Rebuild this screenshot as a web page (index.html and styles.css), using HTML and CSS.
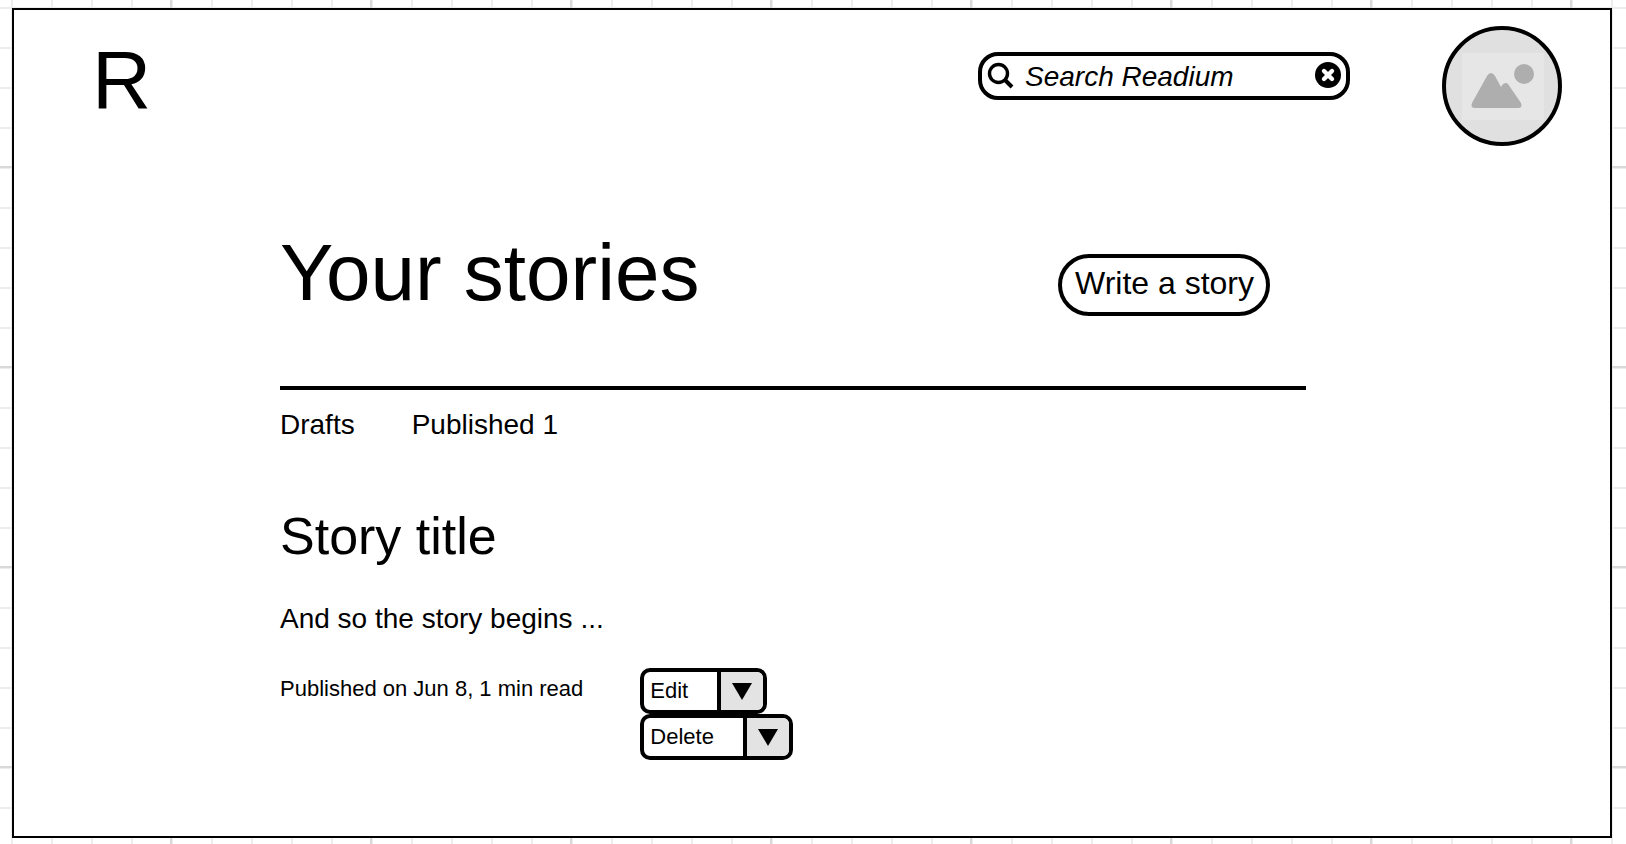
FILE: index.html
```html
<!DOCTYPE html>
<html lang="en">
<head>
  <meta charset="UTF-8" />
  <meta name="viewport" content="width=device-width, initial-scale=1.0" />
  <title>Your stories</title>
  <link rel="stylesheet" href="styles.css">
</head>
<body>
  <div class="frame">
    <header class="top-bar">
      <div class="logo">R</div>
      <div class="search">
        <svg class="search-icon" viewBox="0 0 28 28" width="28" height="28">
          <circle cx="12.5" cy="11.5" r="9" fill="none" stroke="#000" stroke-width="3.4" />
          <path d="M19 18l7 7" stroke="#000" stroke-width="4" />
        </svg>
        <span class="search-text">Search Readium</span>
        <svg class="clear-icon" viewBox="0 0 26 26" width="26" height="26">
          <circle cx="13" cy="13" r="13" fill="#000" />
          <path d="M9 9l8 8M17 9l-8 8" stroke="#fff" stroke-width="4.4" stroke-linecap="round" />
        </svg>
      </div>
      <div class="avatar">
        <svg viewBox="0 0 82 67" width="82" height="67">
          <rect width="82" height="67" fill="#e6e6e6" />
          <circle cx="62" cy="21" r="10" fill="#aeaeae" />
          <path d="M10 50 L25 23 Q29 17 33 23 L39 34 Q41 30 44 30 Q46 30 48 34 L59 50 Q61 55 56 55 L13 55 Q8 55 10 50 Z" fill="#aeaeae" />
        </svg>
      </div>
    </header>

    <main class="content">
      <div class="title-row">
        <h1>Your stories</h1>
        <a class="write-btn" href="#">Write a story</a>
      </div>
      <nav class="tabs">
        <a href="#">Drafts</a>
        <a href="#">Published 1</a>
      </nav>
      <h2>Story title</h2>
      <p class="excerpt">And so the story begins ...</p>
      <div class="story-meta">
        <span class="meta-text">Published on Jun 8, 1 min read</span>
        <div class="actions">
          <div class="select select-edit"><span class="select-label">Edit</span><span class="select-arrow"></span></div>
          <div class="select select-delete"><span class="select-label">Delete</span><span class="select-arrow"></span></div>
        </div>
      </div>
    </main>
  </div>
</body>
</html>
```

FILE: styles.css
```css
* {
  margin: 0;
  padding: 0;
  box-sizing: border-box;
}

html, body {
  width: 100%;
  height: 100%;
  overflow: hidden;
}

body {
  padding: 8px 14px 6px 12px;
  color: #000;
  font-family: "Liberation Sans", Arial, sans-serif;
  background-color: #fff;
  background-image:
    linear-gradient(to right, #d9d9d9 2px, transparent 2px),
    linear-gradient(to bottom, #d9d9d9 2px, transparent 2px),
    linear-gradient(to right, #ededed 2px, transparent 2px),
    linear-gradient(to bottom, #ededed 2px, transparent 2px);
  background-size: 200px 200px, 200px 200px, 40px 40px, 40px 40px;
  background-position: 170px 0, 0 166px, 11px 0, 0 7px;
}

a {
  color: inherit;
  text-decoration: none;
}

.frame {
  width: 1600px;
  height: 830px;
  border: 2px solid #000;
  background: #fff;
}

.top-bar {
  display: flex;
  align-items: flex-start;
  padding: 16px 48px 0 78px;
}

.logo {
  flex: 1;
  margin-top: 8px;
  font-size: 82px;
  line-height: 92px;
}

.search {
  display: flex;
  align-items: center;
  width: 372px;
  height: 48px;
  margin-top: 26px;
  padding: 0 5px 0 4px;
  border: 4px solid #000;
  border-radius: 20px;
}

.search-text {
  flex: 1;
  margin-left: 11px;
  padding-top: 2px;
  font-size: 28px;
  font-style: italic;
}

.clear-icon {
  margin-top: -2px;
}

.avatar {
  display: flex;
  align-items: center;
  justify-content: center;
  width: 120px;
  height: 120px;
  margin-left: 92px;
  padding: 1px 0 0 2px;
  border: 4px solid #000;
  border-radius: 50%;
  background: #e0e0e0;
}

.content {
  width: 1026px;
  margin-left: 266px;
}

.title-row {
  display: flex;
  align-items: flex-start;
  justify-content: space-between;
  height: 244px;
  padding: 85px 36px 0 0;
  margin-top: -4px;
}

h1 {
  font-size: 80px;
  font-weight: 400;
  line-height: 92px;
}

.write-btn {
  height: 62px;
  margin-top: 27px;
  padding: 0 12px 0 13px;
  border: 4px solid #000;
  border-radius: 31px;
  font-size: 32px;
  line-height: 50px;
}

.tabs {
  display: flex;
  gap: 57px;
  padding-top: 19px;
  border-top: 4px solid #000;
  font-size: 28px;
  line-height: 32px;
}

h2 {
  margin-top: 65px;
  font-size: 52px;
  font-weight: 400;
  line-height: 60px;
}

.excerpt {
  margin-top: 36px;
  font-size: 28px;
  line-height: 34px;
}

.story-meta {
  display: flex;
  gap: 57px;
  margin-top: 32px;
}

.meta-text {
  margin-top: 7px;
  font-size: 22px;
  line-height: 28px;
}

.actions {
  display: flex;
  flex-direction: column;
}

.select {
  display: flex;
  height: 46px;
  border: 4px solid #000;
  border-radius: 10px;
  overflow: hidden;
}

.select-edit { width: 127px; }
.select-delete { width: 153px; }

.select-label {
  flex: 1;
  padding-left: 6px;
  font-size: 22px;
  line-height: 38px;
}

.select-arrow {
  display: flex;
  align-items: center;
  justify-content: center;
  width: 46px;
  border-left: 4px solid #000;
  background: #e3e3e3;
}

.select-arrow::after {
  content: "";
  border-left: 10px solid transparent;
  border-right: 10px solid transparent;
  border-top: 17px solid #000;
}
```
